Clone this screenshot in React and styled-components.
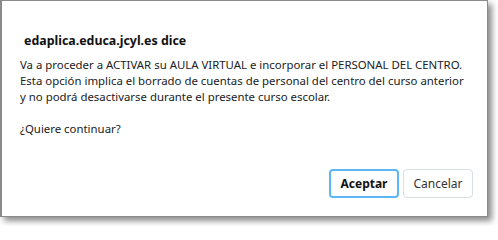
import styled, { createGlobalStyle } from 'styled-components';

const GlobalStyle = createGlobalStyle`
  html, body {
    margin: 0;
    padding: 0;
    background: #ffffff;
  }
  body {
    width: 498px;
    height: 226px;
    overflow: hidden;
    font-family: 'Noto Sans', 'Liberation Sans', sans-serif;
  }
`;

const Dialog = styled.div`
  box-sizing: border-box;
  width: 488px;
  height: 217px;
  background: #ffffff;
  border: 1px solid #8a8a8a;
  border-left: 2px solid #8a8a8a;
  box-shadow: 4px 4px 6px rgba(0, 0, 0, 0.45);
  display: flex;
  flex-direction: column;
  padding: 31px 14px 18px 18px;
`;

const Title = styled.h1`
  margin: 0 0 7px 4px;
  font-size: 12.4px;
  line-height: 18px;
  font-weight: 700;
  color: #111111;
`;

const Message = styled.p`
  margin: 0;
  font-size: 11.4px;
  line-height: 16px;
  color: #202124;
  white-space: pre-line;
`;

const Actions = styled.div`
  margin-top: auto;
  display: flex;
  justify-content: flex-end;
  gap: 4px;
`;

const Button = styled.button`
  box-sizing: border-box;
  width: 70px;
  height: 29px;
  border-radius: 4px;
  background: #ffffff;
  font-family: inherit;
  font-size: 12px;
  color: ${(p) => (p.primary ? '#111111' : '#333333')};
  font-weight: ${(p) => (p.primary ? 700 : 400)};
  border: ${(p) => (p.primary ? '2px solid #5fb6f6' : '1px solid #d9dee3')};
  padding: 0;
`;

export default function App() {
  return (
    <>
      <GlobalStyle />
      <Dialog>
        <Title>edaplica.educa.jcyl.es dice</Title>
        <Message>
          {`Va a proceder a ACTIVAR su AULA VIRTUAL e incorporar el PERSONAL DEL CENTRO.
Esta opción implica el borrado de cuentas de personal del centro del curso anterior
y no podrá desactivarse durante el presente curso escolar.

¿Quiere continuar?`}
        </Message>
        <Actions>
          <Button primary>Aceptar</Button>
          <Button>Cancelar</Button>
        </Actions>
      </Dialog>
    </>
  );
}
